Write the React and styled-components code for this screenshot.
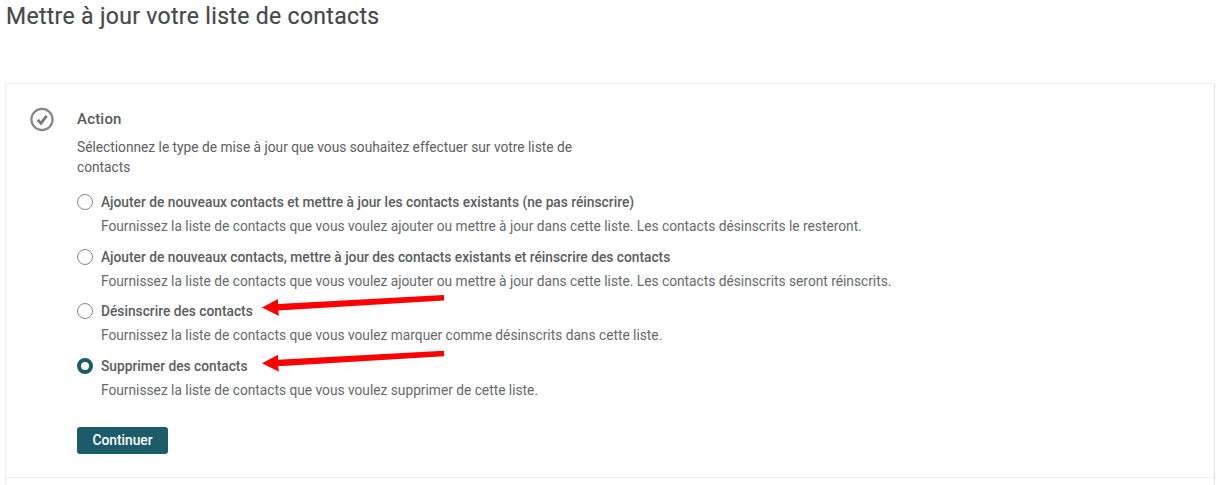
import React from "react";
import styled, { createGlobalStyle } from "styled-components";

const Global = createGlobalStyle`
  html, body { margin: 0; padding: 0; background: #fff; height: 485px; overflow: hidden; }
  body { font-family: Roboto, "Liberation Sans", sans-serif; color: #555; }
`;
const Page = styled.div`
  position: relative;
  width: 1224px;
  height: 485px;
  padding: 0 9px 0 5px;
  box-sizing: border-box;
  overflow: hidden;
`;
const Title = styled.h1`
  margin: 0;
  padding: 4px 0 0 1px;
  height: 83px;
  box-sizing: border-box;
  font-size: 23px;
  line-height: 26px;
  font-weight: 400;
  letter-spacing: 0.32px;
  color: #46494b;
  -webkit-text-stroke: 0.2px #46494b;
`;
const Card = styled.section`
  height: 440px;
  box-sizing: border-box;
  border: 1px solid #efefef;
  border-right-color: #e0e0e0;
  border-radius: 2px;
`;
const Step = styled.div`
  display: flex;
  height: 394px;
  box-sizing: border-box;
  border-bottom: 1px solid #efefef;
  padding: 23px 0 0 24px;
`;
const StepIcon = styled.svg`
  width: 25px;
  height: 25px;
  flex: none;
  margin-right: 22px;
`;
const Body = styled.div`
  display: flex;
  flex-direction: column;
  align-items: flex-start;
`;
const Heading = styled.h2`
  margin: 0;
  font-size: 15px;
  line-height: 24px;
  font-weight: 500;
  color: #55585a;
  letter-spacing: 0.2px;
`;
const Intro = styled.p`
  margin: 6px 0 15px;
  width: 520px;
  font-size: 13.74px;
  line-height: 20px;
  color: #5d6062;
`;
const Options = styled.div`
  display: flex;
  flex-direction: column;
  gap: 10.67px;
`;
const Option = styled.div`
  display: grid;
  grid-template-columns: 16px 1fr;
  column-gap: 8px;
  row-gap: 4px;
  align-items: center;
`;
const Radio = styled.span`
  width: 16px;
  height: 16px;
  box-sizing: border-box;
  border-radius: 50%;
  border: ${(p) => (p.$checked ? "4px solid #1c5b69" : "1px solid #858789")};
  background: #fff;
`;
const OptionLabel = styled.span`
  font-size: 13.75px;
  line-height: 20px;
  font-weight: 500;
  color: #5a5d5f;
`;
const OptionHint = styled.span`
  grid-column: 2;
  font-size: 13.74px;
  line-height: 20px;
  color: #66696b;
`;
const Button = styled.button`
  margin-top: 27px;
  width: 91px;
  height: 27px;
  padding: 0;
  border: 0;
  border-radius: 3px;
  background: #1c5b69;
  color: #fff;
  font-family: inherit;
  font-size: 13.75px;
  font-weight: 500;
`;
const ArrowLayer = styled.svg`
  position: absolute;
  left: 0;
  top: 0;
  width: 1224px;
  height: 485px;
  pointer-events: none;
`;

const options = [
  ["Ajouter de nouveaux contacts et mettre à jour les contacts existants (ne pas réinscrire)", "Fournissez la liste de contacts que vous voulez ajouter ou mettre à jour dans cette liste. Les contacts désinscrits le resteront."],
  ["Ajouter de nouveaux contacts, mettre à jour des contacts existants et réinscrire des contacts", "Fournissez la liste de contacts que vous voulez ajouter ou mettre à jour dans cette liste. Les contacts désinscrits seront réinscrits."],
  ["Désinscrire des contacts", "Fournissez la liste de contacts que vous voulez marquer comme désinscrits dans cette liste."],
  ["Supprimer des contacts", "Fournissez la liste de contacts que vous voulez supprimer de cette liste.", true],
];

const Arrow = ({ y }) => (
  <polygon
    fill="#f00"
    points={`444,${y} 444,${y + 5.5} 278,${y + 15.5} 279,${y + 21} 262,${y + 12.5} 278,${y + 4} 278,${y + 9}`}
  />
);

export default function App() {
  return (
    <Page>
      <Global />
      <Title>Mettre à jour votre liste de contacts</Title>
      <Card>
        <Step>
          <StepIcon viewBox="0 0 25 25">
            <circle cx="12" cy="12.5" r="10.6" fill="none" stroke="#848688" strokeWidth="2.2" />
            <path d="M7.6 12.8l3.4 3.6 5.6-7.6" fill="none" stroke="#77797b" strokeWidth="2.8" />
          </StepIcon>
          <Body>
            <Heading>Action</Heading>
            <Intro>Sélectionnez le type de mise à jour que vous souhaitez effectuer sur votre liste de contacts</Intro>
            <Options>
              {options.map(([label, hint, checked]) => (
                <Option key={label}>
                  <Radio $checked={checked} />
                  <OptionLabel>{label}</OptionLabel>
                  <OptionHint>{hint}</OptionHint>
                </Option>
              ))}
            </Options>
            <Button>Continuer</Button>
          </Body>
        </Step>
      </Card>
      <ArrowLayer viewBox="0 0 1224 485">
        <Arrow y={295} />
        <Arrow y={350.7} />
      </ArrowLayer>
    </Page>
  );
}
